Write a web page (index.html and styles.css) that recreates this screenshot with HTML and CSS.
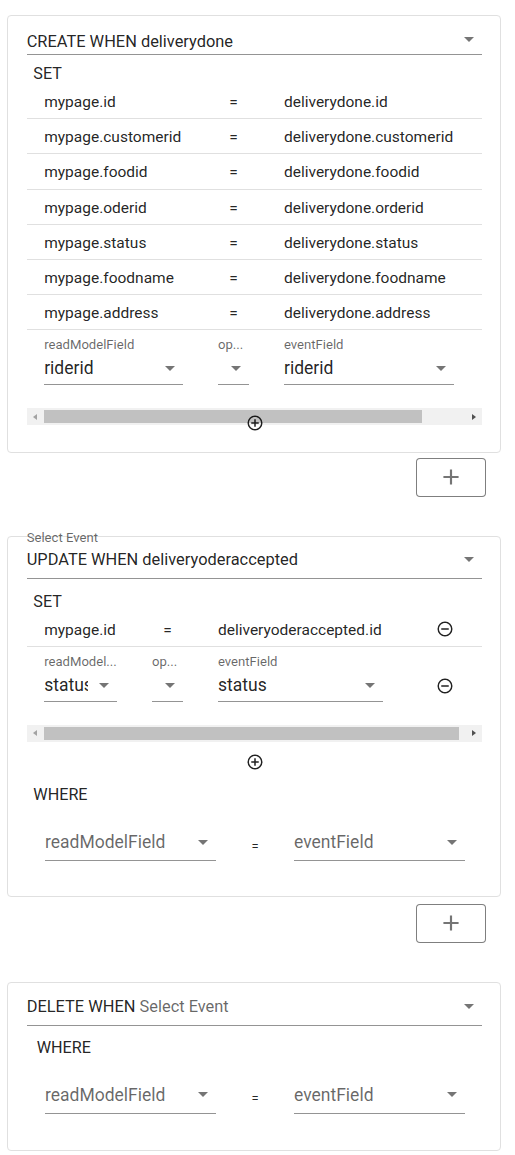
FILE: index.html
```html
<!DOCTYPE html>
<html>
<head>
<meta charset="utf-8">
<link rel="stylesheet" href="styles.css">
</head>
<body>
<section class="card card-create">
  <div class="sel-head head-create">
    <span class="head-text">CREATE WHEN deliverydone</span>
    <span class="caret-box"><span class="caret"></span></span>
  </div>
  <div class="sec-title set-create">SET</div>
  <div class="scroller">
    <div class="tbl tbl-create">
      <div class="trow"><div class="cell">mypage.id</div><div class="cell eq">=</div><div class="cell">deliverydone.id</div><div class="cell icon-cell"><svg class="ico" viewBox="0 0 24 24"><path d="M12,20C7.59,20 4,16.41 4,12C4,7.59 7.59,4 12,4C16.41,4 20,7.59 20,12C20,16.41 16.41,20 12,20M12,2A10,10 0 0,0 2,12A10,10 0 0,0 12,22A10,10 0 0,0 22,12A10,10 0 0,0 12,2M7,13H17V11H7"/></svg></div></div>
      <div class="trow"><div class="cell">mypage.customerid</div><div class="cell eq">=</div><div class="cell">deliverydone.customerid</div><div class="cell icon-cell"><svg class="ico" viewBox="0 0 24 24"><path d="M12,20C7.59,20 4,16.41 4,12C4,7.59 7.59,4 12,4C16.41,4 20,7.59 20,12C20,16.41 16.41,20 12,20M12,2A10,10 0 0,0 2,12A10,10 0 0,0 12,22A10,10 0 0,0 22,12A10,10 0 0,0 12,2M7,13H17V11H7"/></svg></div></div>
      <div class="trow"><div class="cell">mypage.foodid</div><div class="cell eq">=</div><div class="cell">deliverydone.foodid</div><div class="cell icon-cell"><svg class="ico" viewBox="0 0 24 24"><path d="M12,20C7.59,20 4,16.41 4,12C4,7.59 7.59,4 12,4C16.41,4 20,7.59 20,12C20,16.41 16.41,20 12,20M12,2A10,10 0 0,0 2,12A10,10 0 0,0 12,22A10,10 0 0,0 22,12A10,10 0 0,0 12,2M7,13H17V11H7"/></svg></div></div>
      <div class="trow"><div class="cell">mypage.oderid</div><div class="cell eq">=</div><div class="cell">deliverydone.orderid</div><div class="cell icon-cell"><svg class="ico" viewBox="0 0 24 24"><path d="M12,20C7.59,20 4,16.41 4,12C4,7.59 7.59,4 12,4C16.41,4 20,7.59 20,12C20,16.41 16.41,20 12,20M12,2A10,10 0 0,0 2,12A10,10 0 0,0 12,22A10,10 0 0,0 22,12A10,10 0 0,0 12,2M7,13H17V11H7"/></svg></div></div>
      <div class="trow"><div class="cell">mypage.status</div><div class="cell eq">=</div><div class="cell">deliverydone.status</div><div class="cell icon-cell"><svg class="ico" viewBox="0 0 24 24"><path d="M12,20C7.59,20 4,16.41 4,12C4,7.59 7.59,4 12,4C16.41,4 20,7.59 20,12C20,16.41 16.41,20 12,20M12,2A10,10 0 0,0 2,12A10,10 0 0,0 12,22A10,10 0 0,0 22,12A10,10 0 0,0 12,2M7,13H17V11H7"/></svg></div></div>
      <div class="trow"><div class="cell">mypage.foodname</div><div class="cell eq">=</div><div class="cell">deliverydone.foodname</div><div class="cell icon-cell"><svg class="ico" viewBox="0 0 24 24"><path d="M12,20C7.59,20 4,16.41 4,12C4,7.59 7.59,4 12,4C16.41,4 20,7.59 20,12C20,16.41 16.41,20 12,20M12,2A10,10 0 0,0 2,12A10,10 0 0,0 12,22A10,10 0 0,0 22,12A10,10 0 0,0 12,2M7,13H17V11H7"/></svg></div></div>
      <div class="trow"><div class="cell">mypage.address</div><div class="cell eq">=</div><div class="cell">deliverydone.address</div><div class="cell icon-cell"><svg class="ico" viewBox="0 0 24 24"><path d="M12,20C7.59,20 4,16.41 4,12C4,7.59 7.59,4 12,4C16.41,4 20,7.59 20,12C20,16.41 16.41,20 12,20M12,2A10,10 0 0,0 2,12A10,10 0 0,0 12,22A10,10 0 0,0 22,12A10,10 0 0,0 12,2M7,13H17V11H7"/></svg></div></div>
      <div class="trow trow-edit">
        <div class="cell"><div class="f-label">readModelField</div><div class="f-box"><span class="f-val">riderid</span><span class="caret-box"><span class="caret"></span></span></div></div>
        <div class="cell"><div class="f-label">op...</div><div class="f-box"><span class="f-val"></span><span class="caret-box"><span class="caret"></span></span></div></div>
        <div class="cell"><div class="f-label">eventField</div><div class="f-box"><span class="f-val">riderid</span><span class="caret-box"><span class="caret"></span></span></div></div>
        <div class="cell icon-cell"><svg class="ico" viewBox="0 0 24 24"><path d="M12,20C7.59,20 4,16.41 4,12C4,7.59 7.59,4 12,4C16.41,4 20,7.59 20,12C20,16.41 16.41,20 12,20M12,2A10,10 0 0,0 2,12A10,10 0 0,0 12,22A10,10 0 0,0 22,12A10,10 0 0,0 12,2M7,13H17V11H7"/></svg></div>
      </div>
    </div>
  </div>
  <div class="hscroll">
    <span class="sb-btn"><span class="sb-left"></span></span>
    <span class="sb-track"><span class="sb-thumb" style="width:89.8%"></span></span>
    <span class="sb-btn"><span class="sb-right"></span></span>
  </div>
  <div class="add-row add-overlap"><svg class="ico" viewBox="0 0 24 24"><path d="M12,20C7.59,20 4,16.41 4,12C4,7.59 7.59,4 12,4C16.41,4 20,7.59 20,12C20,16.41 16.41,20 12,20M12,2A10,10 0 0,0 2,12A10,10 0 0,0 12,22A10,10 0 0,0 22,12A10,10 0 0,0 12,2M13,7H11V11H7V13H11V17H13V13H17V11H13V7Z"/></svg></div>
</section>
<div class="btn-row btn-row-1"><button class="add-btn"><svg class="plus" viewBox="0 0 24 24"><path d="M19,13H13V19H11V13H5V11H11V5H13V11H19V13Z"/></svg></button></div>

<section class="card card-update">
  <div class="sel-head">
    <span class="float-label">Select Event</span>
    <span class="head-text">UPDATE WHEN deliveryoderaccepted</span>
    <span class="caret-box"><span class="caret"></span></span>
  </div>
  <div class="sec-title set-update">SET</div>
  <div class="scroller">
    <div class="tbl tbl-update">
      <div class="trow"><div class="cell">mypage.id</div><div class="cell eq">=</div><div class="cell">deliveryoderaccepted.id</div><div class="cell icon-cell"><svg class="ico" viewBox="0 0 24 24"><path d="M12,20C7.59,20 4,16.41 4,12C4,7.59 7.59,4 12,4C16.41,4 20,7.59 20,12C20,16.41 16.41,20 12,20M12,2A10,10 0 0,0 2,12A10,10 0 0,0 12,22A10,10 0 0,0 22,12A10,10 0 0,0 12,2M7,13H17V11H7"/></svg></div></div>
      <div class="trow trow-edit">
        <div class="cell"><div class="f-label">readModel...</div><div class="f-box"><span class="f-val">status</span><span class="caret-box"><span class="caret"></span></span></div></div>
        <div class="cell"><div class="f-label">op...</div><div class="f-box"><span class="f-val"></span><span class="caret-box"><span class="caret"></span></span></div></div>
        <div class="cell"><div class="f-label">eventField</div><div class="f-box"><span class="f-val">status</span><span class="caret-box"><span class="caret"></span></span></div></div>
        <div class="cell icon-cell"><svg class="ico" viewBox="0 0 24 24"><path d="M12,20C7.59,20 4,16.41 4,12C4,7.59 7.59,4 12,4C16.41,4 20,7.59 20,12C20,16.41 16.41,20 12,20M12,2A10,10 0 0,0 2,12A10,10 0 0,0 12,22A10,10 0 0,0 22,12A10,10 0 0,0 12,2M7,13H17V11H7"/></svg></div>
      </div>
    </div>
  </div>
  <div class="hscroll">
    <span class="sb-btn"><span class="sb-left"></span></span>
    <span class="sb-track"><span class="sb-thumb" style="width:98.6%"></span></span>
    <span class="sb-btn"><span class="sb-right"></span></span>
  </div>
  <div class="add-row add-gap"><svg class="ico" viewBox="0 0 24 24"><path d="M12,20C7.59,20 4,16.41 4,12C4,7.59 7.59,4 12,4C16.41,4 20,7.59 20,12C20,16.41 16.41,20 12,20M12,2A10,10 0 0,0 2,12A10,10 0 0,0 12,22A10,10 0 0,0 22,12A10,10 0 0,0 12,2M13,7H11V11H7V13H11V17H13V13H17V11H13V7Z"/></svg></div>
  <div class="sec-title where-update">WHERE</div>
  <div class="where-row where-row-update">
    <div class="w-field"><div class="f-box"><span class="f-val ph">readModelField</span><span class="caret-box"><span class="caret"></span></span></div></div>
    <div class="w-eq">=</div>
    <div class="w-field"><div class="f-box"><span class="f-val ph">eventField</span><span class="caret-box"><span class="caret"></span></span></div></div>
  </div>
</section>
<div class="btn-row btn-row-2"><button class="add-btn"><svg class="plus" viewBox="0 0 24 24"><path d="M19,13H13V19H11V13H5V11H11V5H13V11H19V13Z"/></svg></button></div>

<section class="card card-delete">
  <div class="sel-head">
    <span class="head-text">DELETE WHEN <span class="muted">Select Event</span></span>
    <span class="caret-box"><span class="caret"></span></span>
  </div>
  <div class="sec-title where-delete">WHERE</div>
  <div class="where-row where-row-delete">
    <div class="w-field"><div class="f-box"><span class="f-val ph">readModelField</span><span class="caret-box"><span class="caret"></span></span></div></div>
    <div class="w-eq">=</div>
    <div class="w-field"><div class="f-box"><span class="f-val ph">eventField</span><span class="caret-box"><span class="caret"></span></span></div></div>
  </div>
</section>
</body>
</html>
```

FILE: styles.css
```css
html, body {
  margin: 0;
  background: #ffffff;
}
body {
  padding-top: 15.3px;
  font-family: Roboto, "Liberation Sans", Arial, sans-serif;
  color: rgba(0, 0, 0, 0.87);
}

.card {
  margin-left: 7.3px;
  width: 494px;
  box-sizing: border-box;
  border: 1px solid #e0e0e0;
  border-radius: 4px;
  padding: 0 18px 0 18.4px;
}
.card-create { padding-bottom: 19.8px; }
.card-update { margin-top: 39px; padding-bottom: 35px; }
.card-delete { margin-top: 39.4px; padding-bottom: 35.7px; }

.sel-head {
  position: relative;
  display: flex;
  align-items: center;
  border-bottom: 1px solid rgba(0, 0, 0, 0.42);
  font-size: 16.4px;
  line-height: 20px;
  padding: 13.4px 0 8.3px;
}
.head-create { padding: 15.6px 0 2.1px; }
.head-create .caret-box { margin-bottom: 5px; }
.head-text {
  flex: 1;
  white-space: nowrap;
}
.muted { color: rgba(0, 0, 0, 0.6); }
.float-label {
  position: absolute;
  left: 0;
  top: -6.5px;
  font-size: 13.1px;
  line-height: 16px;
  color: rgba(0, 0, 0, 0.6);
}

.caret-box {
  flex: none;
  width: 24px;
  margin-left: 4px;
  margin-right: 1px;
  display: flex;
  align-items: center;
  justify-content: center;
}
.caret {
  width: 0;
  height: 0;
  border-left: 5.2px solid transparent;
  border-right: 5.2px solid transparent;
  border-top: 5px solid rgba(0, 0, 0, 0.54);
}

.sec-title {
  font-size: 16.2px;
  line-height: 20px;
  padding-left: 6.6px;
}
.set-create { margin-top: 9px; }
.set-update { margin-top: 12.7px; }
.where-update { margin-top: 14.5px; }
.where-delete { margin-top: 12.1px; padding-left: 10px; }

.scroller { overflow: hidden; }
.tbl-create { width: 509px; }
.tbl-update { width: 464px; }

.trow {
  display: grid;
  height: 35.2px;
  box-sizing: border-box;
  padding-top: 2px;
  border-bottom: 1px solid rgba(0, 0, 0, 0.12);
  align-items: center;
  font-size: 15.5px;
}
.tbl-create .trow { grid-template-columns: 173.8px 66px 205px 64.2px; }
.tbl-update .trow { grid-template-columns: 107.8px 66px 200px 90.2px; }
.cell {
  padding: 0 17.5px;
  white-space: nowrap;
  min-width: 0;
}
.eq { text-align: center; }
.icon-cell { display: flex; }
.icon-cell .ico { margin-left: 18.5px; margin-top: -2px; }

.trow-edit {
  height: auto;
  border-bottom: none;
  padding: 6.6px 0 23px;
  align-items: end;
}
.trow-edit .icon-cell { padding-bottom: 6.5px; }
.trow-edit .icon-cell .ico { margin-top: 0; }

.f-label {
  font-size: 13.1px;
  line-height: 16px;
  color: rgba(0, 0, 0, 0.6);
  white-space: nowrap;
}
.f-box {
  display: flex;
  align-items: center;
  height: 31px;
  border-bottom: 1px solid rgba(0, 0, 0, 0.42);
}
.f-val {
  flex: 1;
  min-width: 0;
  overflow: hidden;
  white-space: nowrap;
  font-size: 17.5px;
  line-height: 24px;
}
.ph { color: rgba(0, 0, 0, 0.6); }

.ico {
  width: 18px;
  height: 18px;
  flex: none;
  fill: rgba(0, 0, 0, 0.87);
  display: block;
}

.hscroll {
  display: flex;
  height: 17.4px;
  background: #f1f1f1;
}
.sb-btn {
  flex: none;
  width: 17.3px;
  display: flex;
  align-items: center;
  justify-content: center;
}
.sb-left {
  width: 0;
  height: 0;
  border-top: 3.5px solid transparent;
  border-bottom: 3.5px solid transparent;
  border-right: 4px solid #a3a3a3;
}
.sb-right {
  width: 0;
  height: 0;
  border-top: 3.5px solid transparent;
  border-bottom: 3.5px solid transparent;
  border-left: 4px solid #505050;
}
.sb-track {
  flex: 1;
  display: flex;
  align-items: center;
}
.sb-thumb {
  height: 13.4px;
  background: #c1c1c1;
}

.add-row {
  display: flex;
  justify-content: center;
  padding-left: 2px;
}
.add-overlap { margin-top: -11.5px; }
.add-gap { margin-top: 10.5px; }

.where-row {
  display: flex;
  align-items: center;
  padding-left: 18.3px;
}
.where-row-update { margin-top: 19.2px; }
.where-row-delete { margin-top: 18.8px; }
.w-field { width: 171px; flex: none; }
.w-field .f-box { height: 36px; }
.w-eq {
  width: 78px;
  flex: none;
  text-align: center;
  font-size: 13px;
  margin-top: 7px;
}

.btn-row {
  width: 494px;
  margin-left: 7.3px;
  box-sizing: border-box;
  padding-right: 15.7px;
  display: flex;
  justify-content: flex-end;
}
.btn-row-1 { margin-top: 5px; }
.btn-row-2 { margin-top: 6.6px; }
.add-btn {
  width: 70px;
  height: 39px;
  padding: 0;
  box-sizing: border-box;
  border: 1px solid rgba(0, 0, 0, 0.5);
  border-radius: 4px;
  background: #ffffff;
  display: flex;
  align-items: center;
  justify-content: center;
}
.plus {
  width: 26px;
  height: 26px;
  fill: #757575;
  display: block;
}
```
